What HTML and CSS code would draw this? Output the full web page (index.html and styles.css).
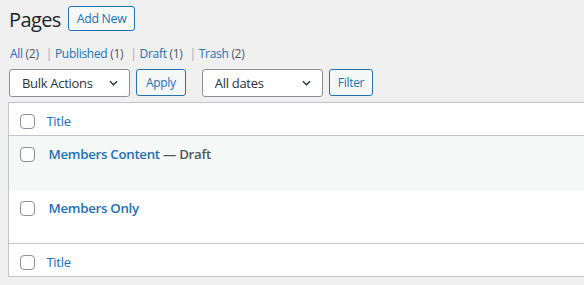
FILE: index.html
```html
<!doctype html>
<html lang="en">
    <head>
        <meta charset="UTF-8" />
        <title>Pages</title>
        <link rel="stylesheet" href="styles.css">
    </head>
    <body>
        <div class="wrap">
            <div class="page-head">
                <h1>Pages</h1>
                <a href="#" class="button add-new">Add New</a>
            </div>

            <ul class="subsubsub">
                <li><a href="#">All <span class="count">(2)</span></a></li>
                <li class="sep">|</li>
                <li><a href="#">Published <span class="count">(1)</span></a></li>
                <li class="sep">|</li>
                <li><a href="#">Draft <span class="count">(1)</span></a></li>
                <li class="sep">|</li>
                <li><a href="#">Trash <span class="count">(2)</span></a></li>
            </ul>

            <div class="tablenav">
                <div class="actions">
                    <div class="select bulk">
                        <span>Bulk Actions</span>
                        <svg class="chevron" viewBox="0 0 10 6"><path d="M1 1l4 4 4-4" /></svg>
                    </div>
                    <button class="button">Apply</button>
                </div>
                <div class="actions">
                    <div class="select dates">
                        <span>All dates</span>
                        <svg class="chevron" viewBox="0 0 10 6"><path d="M1 1l4 4 4-4" /></svg>
                    </div>
                    <button class="button">Filter</button>
                </div>
            </div>

            <table class="list-table">
                <thead>
                    <tr>
                        <td class="check-column"><span class="checkbox"></span></td>
                        <th class="column-title"><a href="#">Title</a></th>
                    </tr>
                </thead>
                <tbody>
                    <tr class="alternate">
                        <th class="check-column"><span class="checkbox"></span></th>
                        <td class="row-title">
                            <strong><a href="#">Members Content</a> — <span class="post-state">Draft</span></strong>
                        </td>
                    </tr>
                    <tr>
                        <th class="check-column"><span class="checkbox"></span></th>
                        <td class="row-title">
                            <strong><a href="#">Members Only</a></strong>
                        </td>
                    </tr>
                </tbody>
                <tfoot>
                    <tr>
                        <td class="check-column"><span class="checkbox"></span></td>
                        <th class="column-title"><a href="#">Title</a></th>
                    </tr>
                </tfoot>
            </table>
        </div>
    </body>
</html>
```

FILE: styles.css
```css
*,
*::before,
*::after {
    margin: 0;
    padding: 0;
    box-sizing: border-box;
}

:root {
    --link: #2271b1;
    --text: #3c434a;
    --muted: #50575e;
    --border: #c3c4c7;
    --input-border: #8c8f94;
}

html,
body {
    overflow: hidden;
}

body {
    font-family: "Open Sans", "Noto Sans", sans-serif;
    font-size: 13px;
    letter-spacing: -0.3px;
    color: var(--text);
    background: #f0f0f1;
}

a {
    color: var(--link);
    text-decoration: none;
}

.wrap {
    margin-left: 8px;
    width: 600px;
}

/* Heading */
.page-head {
    display: flex;
    align-items: center;
    gap: 7px;
    padding: 6px 0 0 1px;
    height: 31px;
}

h1 {
    font-size: 20px;
    font-weight: 400;
    letter-spacing: -0.6px;
    line-height: 1;
    color: #1d2327;
    margin-top: 2px;
}

.button {
    display: inline-flex;
    align-items: center;
    font-family: inherit;
    font-size: 12px;
    letter-spacing: inherit;
    color: var(--link);
    background: #f6f7f7;
    border: 1px solid var(--link);
    border-radius: 3px;
    padding: 0 8px;
    cursor: pointer;
}

.add-new {
    height: 25px;
    font-size: 12.3px;
}

/* Views */
.subsubsub {
    list-style: none;
    display: flex;
    gap: 3px;
    margin: 15px 0 0 2px;
    font-size: 12px;
    line-height: 16px;
    height: 16px;
}

.subsubsub .count {
    color: var(--muted);
}

.subsubsub .sep {
    color: #a7aaad;
    margin-left: 4px;
}

/* Table nav */
.tablenav {
    display: flex;
    gap: 16px;
    margin: 7px 0 0 1px;
    height: 28px;
}

.actions {
    display: flex;
    gap: 6px;
}

.select {
    display: flex;
    align-items: center;
    justify-content: space-between;
    height: 28px;
    padding: 0 11px 0 12px;
    background: #fff;
    border: 1px solid var(--input-border);
    border-radius: 3px;
    font-size: 13px;
    color: #2c3338;
}

.bulk,
.dates {
    width: 121px;
}

.chevron {
    width: 9px;
    height: 6px;
    fill: none;
    stroke: #2c3338;
    stroke-width: 1.6;
}

.tablenav .button {
    height: 27px;
    padding: 0 9px;
}

.tablenav .actions:last-child .button {
    padding: 0 8px;
}

/* List table */
.list-table {
    margin-top: 5px;
    width: 100%;
    border: 1px solid var(--border);
    border-collapse: collapse;
    background: #fff;
}

.list-table th,
.list-table td {
    text-align: left;
    vertical-align: top;
    font-weight: 400;
}

.list-table thead tr,
.list-table tfoot tr {
    height: 33px;
}

.list-table thead tr {
    border-bottom: 1px solid var(--border);
}

.list-table tfoot tr {
    border-top: 1px solid var(--border);
}

.list-table tbody tr {
    height: 54px;
}

.alternate {
    background: #f6f7f7;
}

.check-column {
    width: 38px;
    padding: 11px 0 0 11px;
}

.checkbox {
    display: block;
    width: 15px;
    height: 15px;
    border: 1px solid var(--input-border);
    border-radius: 4px;
    background: #fff;
}

.column-title {
    font-size: 13px;
    padding-top: 9px;
}

.row-title {
    padding: 9px 0 0 2px;
    font-size: 13.3px;
}

.row-title strong {
    font-weight: 600;
    color: var(--muted);
}
```
